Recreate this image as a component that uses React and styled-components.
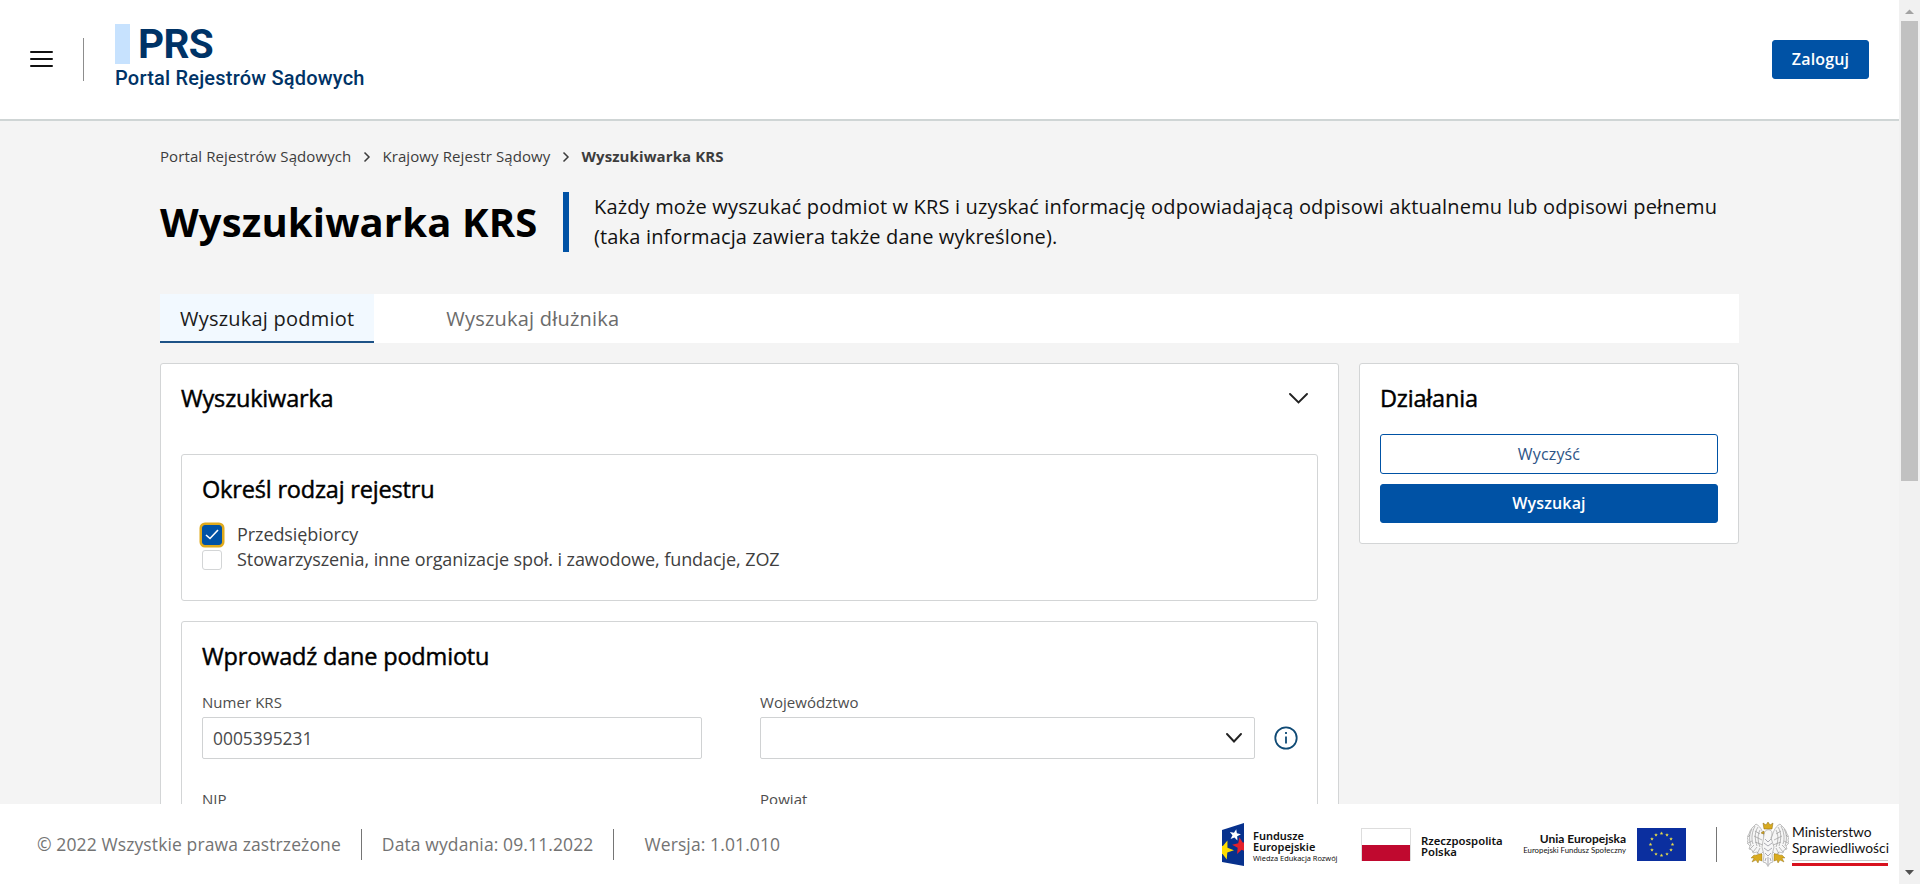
import React from "react";
import styled, { createGlobalStyle } from "styled-components";

const Global = createGlobalStyle`
  *, *::before, *::after { box-sizing: border-box; }
  html, body { margin: 0; height: 100%; overflow: hidden; }
  body { font-family: "Open Sans", "Noto Sans", sans-serif; color: #000; background: #f4f4f4; }
  h1, h2, h3, p { margin: 0; }
`;

const Window = styled.div`
  display: flex;
  width: 100vw;
  height: 884px;
  overflow: hidden;
`;
const Page = styled.div`
  flex: 1;
  min-width: 0;
  display: flex;
  flex-direction: column;
`;
const Header = styled.header`
  height: 121px;
  flex: none;
  display: flex;
  align-items: center;
  padding: 0 30px;
  background: #fff;
  border-bottom: 2px solid #cfd5d5;
`;
const MenuIcon = styled.svg`
  width: 23px;
  height: 18px;
  margin-bottom: 1px;
`;
const HeaderRule = styled.span`
  width: 1px;
  height: 43px;
  margin: 0 31px 0 30px;
  background: #8d8d8d;
`;
const Brand = styled.div`
  display: flex;
  flex-direction: column;
  font-family: Roboto, sans-serif;
  color: #003366;
  height: 70px;
  margin-bottom: 2px;
`;
const BrandTop = styled.div`
  display: flex;
  align-items: center;
  gap: 8px;
  height: 40px;
  font-size: 40.5px;
  line-height: 40px;
  font-weight: 700;
  letter-spacing: -0.6px;
  &::before {
    content: "";
    width: 15px;
    height: 40px;
    background: #c7e2fe;
  }
`;
const BrandName = styled.div`
  margin-top: 1px;
  font-size: 20px;
  line-height: 26px;
  font-weight: 500;
  letter-spacing: 0.2px;
  white-space: nowrap;
`;
const Button = styled.button`
  display: flex;
  align-items: center;
  justify-content: center;
  width: ${(p) => p.$width || "100%"};
  height: ${(p) => (p.$outline ? 40 : 39)}px;
  padding: 0 0 1px;
  border: 1px solid #0052a5;
  border-radius: 3px;
  background: ${(p) => (p.$outline ? "#fff" : "#0052a5")};
  color: ${(p) => (p.$outline ? "#2d5486" : "#fff")};
  font: ${(p) => (p.$outline ? 400 : 600)} 16px/20px "Open Sans", sans-serif;
  letter-spacing: 0.15px;
`;
const Main = styled.main`
  flex: 1;
  min-height: 0;
  overflow: hidden;
  padding: 23px 160px 0;
`;
const Crumbs = styled.nav`
  display: flex;
  align-items: center;
  height: 24px;
  font-size: 15px;
  letter-spacing: 0.1px;
  color: #3c3c3c;
  white-space: nowrap;
  svg { margin: 2px 11px 0 12px; }
  strong { font-weight: 700; }
`;
const Intro = styled.section`
  display: flex;
  align-items: center;
  height: 60px;
  margin-top: 24px;
`;
const Title = styled.h1`
  width: 403px;
  flex: none;
  font-size: 40px;
  line-height: 60px;
  font-weight: 700;
  letter-spacing: 0.15px;
  white-space: nowrap;
`;
const Lead = styled.p`
  padding-left: 25px;
  border-left: 6px solid #0052a5;
  font-size: 20px;
  line-height: 30px;
  letter-spacing: 0.16px;
  color: #111;
  white-space: nowrap;
`;
const Tabs = styled.div`
  display: flex;
  height: 49px;
  margin-top: 42px;
  background: #fff;
`;
const Tab = styled.div`
  height: 49px;
  margin-right: 52px;
  padding: 0 20px;
  font-size: 20px;
  line-height: 49px;
  letter-spacing: 0.22px;
  white-space: nowrap;
  color: ${(p) => (p.$active ? "#1b1b1b" : "#6b6b6b")};
  background: ${(p) => (p.$active ? "#f2f9ff" : "transparent")};
  box-shadow: ${(p) => (p.$active ? "inset 0 -2px 0 #1d5287" : "none")};
`;
const Columns = styled.div`
  display: flex;
  align-items: flex-start;
  gap: 20px;
  margin-top: 20px;
`;
const Card = styled.section`
  border: 1px solid #d3d5d6;
  border-radius: 3px;
  background: #fff;
  padding: 0 20px;
`;
const SearchCard = styled(Card)`
  flex: 1;
  min-width: 0;
  height: 900px;
`;
const ActionsCard = styled(Card)`
  flex: none;
  width: 380px;
  height: 181px;
`;
const CardHead = styled.div`
  display: flex;
  align-items: center;
  height: 70px;
  padding: 0 10px 1px 0;
  h2 { padding-bottom: 1px; }
`;
const Heading = styled.h2`
  font-size: 23.5px;
  line-height: 34px;
  font-weight: 400;
  letter-spacing: -0.18px;
  -webkit-text-stroke: 0.45px #000;
  white-space: nowrap;
`;
const ButtonStack = styled.div`
  display: flex;
  flex-direction: column;
  gap: 10px;
`;
const Group = styled(Card)`
  height: ${(p) => p.$height}px;
  margin-top: 20px;
  padding-top: 17px;
`;
const Options = styled.div`
  margin-top: 15px;
`;
const Option = styled.label`
  display: flex;
  align-items: center;
  gap: 15px;
  height: 25px;
  font-size: 18px;
  letter-spacing: -0.08px;
  color: #3f3f3f;
  white-space: nowrap;
`;
const Box = styled.span`
  display: flex;
  align-items: center;
  justify-content: center;
  width: 20px;
  height: 20px;
  margin-top: 2px;
  border-radius: 3px;
  border: 1px solid ${(p) => (p.$checked ? "#0052a5" : "#d3d5d6")};
  background: ${(p) => (p.$checked ? "#0052a5" : "#fff")};
  box-shadow: ${(p) => (p.$checked ? "0 0 0 2.5px #e0aa1c" : "none")};
`;
const Fields = styled.div`
  display: grid;
  grid-template-columns: 500px 538px;
  column-gap: 58px;
  row-gap: 30px;
  margin-top: 19px;
`;
const Field = styled.div`
  display: flex;
  flex-direction: column;
`;
const Label = styled.span`
  height: 25px;
  font-size: 15px;
  line-height: 21px;
  letter-spacing: 0.05px;
  color: #4d4d4d;
`;
const Row = styled.div`
  display: flex;
  align-items: center;
  gap: 19px;
`;
const Input = styled.div`
  flex: 1;
  display: flex;
  align-items: center;
  justify-content: ${(p) => (p.$select ? "flex-end" : "flex-start")};
  height: 42px;
  padding: 0 12px 0 10px;
  border: 1px solid #d0d2d3;
  border-radius: 2px;
  font-size: 17.4px;
  color: #4a4a4a;
`;
const Footer = styled.footer`
  flex: none;
  height: 80px;
  display: flex;
  align-items: center;
  padding: 0 11px 0 37px;
  background: #fff;
  font-size: 17.5px;
  letter-spacing: 0.11px;
  color: #737373;
  white-space: nowrap;
`;
const FooterRule = styled.span`
  width: 1px;
  height: ${(p) => p.$height || 31}px;
  margin: 0 ${(p) => p.$right || 20}px 0 ${(p) => p.$left || 20}px;
  background: #757575;
`;
const Partners = styled.div`
  display: flex;
  align-items: center;
  margin-left: auto;
  height: 80px;
  color: #111;
  letter-spacing: 0;
`;
const PartnerText = styled.div`
  width: ${(p) => p.$width}px;
  font-family: ${(p) => p.$font || '"Noto Sans"'}, sans-serif;
  margin: ${(p) => p.$margin};
  display: flex;
  flex-direction: column;
  align-items: ${(p) => p.$align || "flex-start"};
`;
const Strong = styled.div`
  font-size: ${(p) => p.$size}px;
  line-height: 11px;
  font-weight: ${(p) => p.$weight || 600};
`;
const Small = styled.div`
  font-size: ${(p) => p.$size}px;
  line-height: 12px;
`;
const PolishFlag = styled.span`
  width: 50px;
  height: 33px;
  border: 1px solid #ddd;
  border-bottom: 0;
  background: linear-gradient(#fff 50%, #c0092f 50%);
`;
const Ministry = styled.div`
  width: 96px;
  margin: 2px 0 0 3px;
  font: 400 13.8px/16px Lato, sans-serif;
`;
const MinistryLine = styled.div`
  margin-top: 4px;
  height: 6px;
  border-top: 1px solid #c9c9c9;
  background: linear-gradient(#fff 2px, #d8121f 2px);
`;
const Scrollbar = styled.div`
  width: 21px;
  flex: none;
  display: flex;
  flex-direction: column;
  align-items: center;
  background: #f1f1f1;
`;
const Thumb = styled.div`
  width: 17px;
  height: 460px;
  background: #c1c1c1;
`;
const ScrollArrow = styled.svg`
  width: 17px;
  height: 21px;
  flex: none;
`;
const Spacer = styled.span`
  flex: 1;
`;

const Chevron = ({ w, h }) => (
  <svg width={w + 2} height={h + 2} viewBox={`-1 -1 ${w + 2} ${h + 2}`} fill="none" stroke="#222" strokeWidth="1.9" strokeLinecap="round">
    <path d={`M0 0 L${w / 2} ${h} L${w} 0`} />
  </svg>
);
const CrumbArrow = () => (
  <svg width="8" height="12" viewBox="0 0 8 12" fill="none" stroke="#3c3c3c" strokeWidth="1.5">
    <path d="M1.5 1.5 6 6 1.5 10.5" />
  </svg>
);
const starPoints = (cx, cy, r, rot = 0) =>
  Array.from({ length: 10 }, (_, i) => {
    const a = ((i * 36 - 90 + rot) * Math.PI) / 180;
    const q = i % 2 ? r * 0.42 : r;
    return `${(cx + q * Math.cos(a)).toFixed(2)},${(cy + q * Math.sin(a)).toFixed(2)}`;
  }).join(" ");

const FundsLogo = () => (
  <svg width="22" height="43" viewBox="0 0 22 43">
    <clipPath id="funds"><path d="M0 7 22 0V43L0 39Z" /></clipPath>
    <g clipPath="url(#funds)">
      <rect width="22" height="43" fill="#07318d" />
      <polygon points={starPoints(2, 27, 10, 20)} fill="#ffdc00" />
      <polygon points={starPoints(19, 23, 9, -10)} fill="#e3202c" />
      <polygon points={starPoints(13, 12, 6, 12)} fill="#fff" />
    </g>
  </svg>
);
const EuFlag = () => (
  <svg width="49" height="33" viewBox="0 0 49 33">
    <rect width="49" height="33" fill="#0b2f9f" />
    {Array.from({ length: 12 }, (_, i) => (
      <polygon
        key={i}
        points={starPoints(24.5 + 11 * Math.sin((i * Math.PI) / 6), 16.5 - 11 * Math.cos((i * Math.PI) / 6), 1.9)}
        fill="#e8dc4a"
      />
    ))}
  </svg>
);
const wing = (
  <g>
    <path d="M18 17C16 12 15 5 9 2L7 4 5 6 3 9 2 12 0 15 1 18 0 21 3 24 2 27 5 28 6 31 10 30 13 33 17 29Z" fill="#f6f6f6" stroke="#999" strokeWidth=".6" />
    <path d="M8 4C5 10 4 16 6 22M5 7C2 12 2 18 4 24M11 5C7 11 8 18 10 24M13 8C10 14 11 20 13 25M3 13 1 15M5 19 1 21M7 23 3 27M10 25 6 30M13 26 10 32M8 9 13 12M7 14 15 18M8 20 16 23" fill="none" stroke="#8d8d8d" strokeWidth=".6" />
    <path d="M15 32C12 31 10 34 7 33L4 36 7 36 5 40 9 38 11 41 12 38 15 39Z" fill="#d9ab20" stroke="#8a6a12" strokeWidth=".4" />
  </g>
);
const Eagle = () => (
  <svg width="42" height="45" viewBox="0 0 42 45">
    {wing}
    <g transform="translate(42 0) scale(-1 1)">{wing}</g>
    <path d="M17 13C17 9 20 7 23 8C26 9 25 13 24 16L27 25 25 33 26 40 23 41 21 44.5 19 41 16 40 17 33 15 25Z" fill="#f7f7f7" stroke="#999" strokeWidth=".6" />
    <path d="M18 17 21 20 24 17M17 21 21 24 25 21M17 26 21 29 25 26M18 31 21 34 24 31M21 35V43M19 36 18 39M23 36 24 39" fill="none" stroke="#8b8b96" strokeWidth=".7" />
    <path d="M17 7 16 1 19 3 21 0 23 3 26 1 25 7ZM17 9 14 11 17 12Z" fill="#d9ab20" stroke="#8a6a12" strokeWidth=".5" />
  </svg>
);

export default function App() {
  return (
    <>
      <Global />
      <Window>
        <Page>
          <Header>
            <MenuIcon viewBox="0 0 23 18" stroke="#111" strokeWidth="2" strokeLinecap="round">
              <path d="M1 2H22M1 9H22M1 16H22" />
            </MenuIcon>
            <HeaderRule />
            <Brand>
              <BrandTop>PRS</BrandTop>
              <BrandName>Portal Rejestrów Sądowych</BrandName>
            </Brand>
            <Spacer />
            <Button $width="97px">Zaloguj</Button>
          </Header>
          <Main>
            <Crumbs>
              <span>Portal Rejestrów Sądowych</span>
              <CrumbArrow />
              <span>Krajowy Rejestr Sądowy</span>
              <CrumbArrow />
              <strong>Wyszukiwarka KRS</strong>
            </Crumbs>
            <Intro>
              <Title>Wyszukiwarka KRS</Title>
              <Lead>
                Każdy może wyszukać podmiot w KRS i uzyskać informację odpowiadającą odpisowi aktualnemu lub odpisowi pełnemu
                <br />
                (taka informacja zawiera także dane wykreślone).
              </Lead>
            </Intro>
            <Tabs>
              <Tab $active>Wyszukaj podmiot</Tab>
              <Tab>Wyszukaj dłużnika</Tab>
            </Tabs>
            <Columns>
              <SearchCard>
                <CardHead>
                  <Heading>Wyszukiwarka</Heading>
                  <Spacer />
                  <Chevron w={17} h={8.5} />
                </CardHead>
                <Group $height={147}>
                  <Heading as="h3">Określ rodzaj rejestru</Heading>
                  <Options>
                    <Option>
                      <Box $checked>
                        <svg width="14" height="11" viewBox="0 0 14 11" fill="none" stroke="#fff" strokeWidth="1.6">
                          <path d="M1 6 5 9.5 13 1" />
                        </svg>
                      </Box>
                      Przedsiębiorcy
                    </Option>
                    <Option>
                      <Box />
                      Stowarzyszenia, inne organizacje społ. i zawodowe, fundacje, ZOZ
                    </Option>
                  </Options>
                </Group>
                <Group $height={600}>
                  <Heading as="h3">Wprowadź dane podmiotu</Heading>
                  <Fields>
                    <Field>
                      <Label>Numer KRS</Label>
                      <Row><Input>0005395231</Input></Row>
                    </Field>
                    <Field>
                      <Label>Województwo</Label>
                      <Row>
                        <Input $select><Chevron w={14} h={7.5} /></Input>
                        <svg width="24" height="24" viewBox="0 0 24 24" fill="none" stroke="#0f4a75" strokeWidth="1.8">
                          <circle cx="12" cy="12" r="10.7" />
                          <path d="M12 10.5V17.5M12 6V8" />
                        </svg>
                      </Row>
                    </Field>
                    <Field><Label>NIP</Label></Field>
                    <Field><Label>Powiat</Label></Field>
                  </Fields>
                </Group>
              </SearchCard>
              <ActionsCard>
                <CardHead><Heading>Działania</Heading></CardHead>
                <ButtonStack>
                  <Button $outline>Wyczyść</Button>
                  <Button>Wyszukaj</Button>
                </ButtonStack>
              </ActionsCard>
            </Columns>
          </Main>
          <Footer>
            <span>© 2022 Wszystkie prawa zastrzeżone</span>
            <FooterRule />
            <span>Data wydania: 09.11.2022</span>
            <FooterRule $right={30} />
            <span>Wersja: 1.01.010</span>
            <Partners>
              <FundsLogo />
              <PartnerText $width={84} $margin="5px 24px 0 9px">
                <Strong $size={11}>Fundusze<br />Europejskie</Strong>
                <Small $size={7.4}>Wiedza Edukacja Rozwój</Small>
              </PartnerText>
              <PolishFlag />
              <PartnerText $width={83} $margin="3px 19px 0 10px">
                <Strong $size={11.3}>Rzeczpospolita<br />Polska</Strong>
              </PartnerText>
              <PartnerText $width={103} $margin="0 11px 0 0" $align="flex-end" $font="Lato">
                <Strong $size={12} $weight={700}>Unia Europejska</Strong>
                <Small $size={7.8}>Europejski Fundusz Społeczny</Small>
              </PartnerText>
              <EuFlag />
              <FooterRule $left={30} $right={30} $height={35} />
              <Eagle />
              <Ministry>Ministerstwo<br />Sprawiedliwości<MinistryLine /></Ministry>
            </Partners>
          </Footer>
        </Page>
        <Scrollbar>
          <ScrollArrow viewBox="0 0 17 21"><path d="M4 14 8.5 9.5 13 14Z" fill="#a3a3a3" /></ScrollArrow>
          <Thumb />
          <Spacer />
          <ScrollArrow viewBox="0 0 17 21"><path d="M4 7 8.5 12 13 7Z" fill="#505050" /></ScrollArrow>
        </Scrollbar>
      </Window>
    </>
  );
}
